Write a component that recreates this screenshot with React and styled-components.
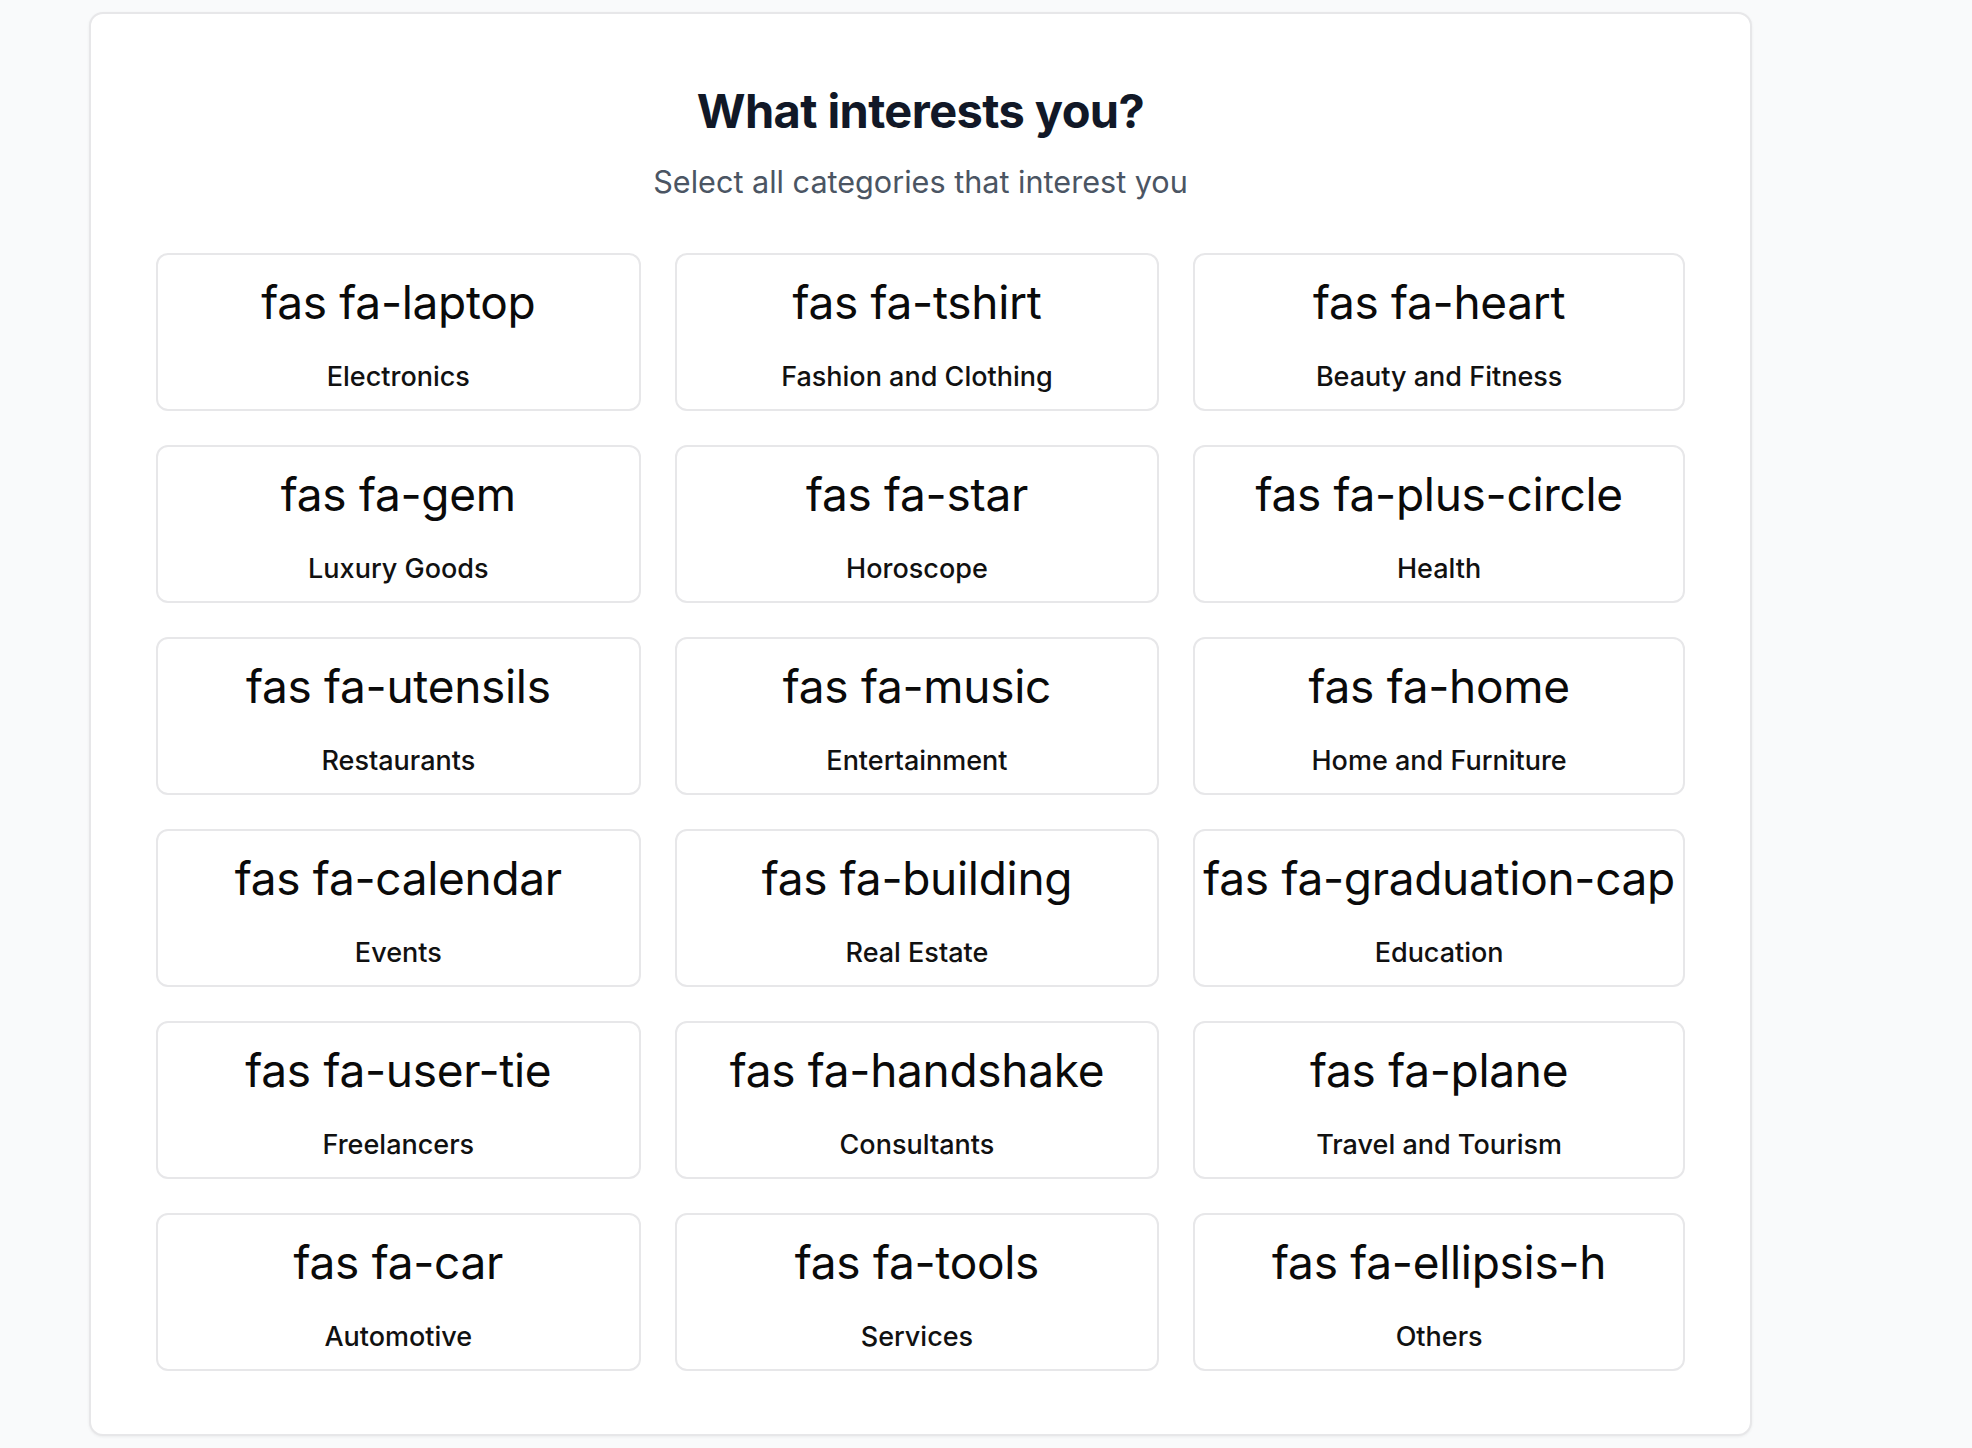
import React from "react";
import styled, { createGlobalStyle } from "styled-components";

const categories = [
  { icon: "fas fa-laptop", name: "Electronics" },
  { icon: "fas fa-tshirt", name: "Fashion and Clothing" },
  { icon: "fas fa-heart", name: "Beauty and Fitness" },
  { icon: "fas fa-gem", name: "Luxury Goods" },
  { icon: "fas fa-star", name: "Horoscope" },
  { icon: "fas fa-plus-circle", name: "Health" },
  { icon: "fas fa-utensils", name: "Restaurants" },
  { icon: "fas fa-music", name: "Entertainment" },
  { icon: "fas fa-home", name: "Home and Furniture" },
  { icon: "fas fa-calendar", name: "Events" },
  { icon: "fas fa-building", name: "Real Estate" },
  { icon: "fas fa-graduation-cap", name: "Education" },
  { icon: "fas fa-user-tie", name: "Freelancers" },
  { icon: "fas fa-handshake", name: "Consultants" },
  { icon: "fas fa-plane", name: "Travel and Tourism" },
  { icon: "fas fa-car", name: "Automotive" },
  { icon: "fas fa-tools", name: "Services" },
  { icon: "fas fa-ellipsis-h", name: "Others" },
];

const GlobalStyle = createGlobalStyle`
  body {
    margin: 0;
    background: #f9fafb;
    font-family: Inter, "Noto Sans", sans-serif;
  }
`;

const Page = styled.div`
  padding: 12px 0 10px 89px;
`;

const Card = styled.div`
  width: 1663px;
  box-sizing: border-box;
  background: #ffffff;
  border: 2px solid #e7e7e9;
  border-radius: 14px;
  box-shadow: 0 1px 3px rgba(0, 0, 0, 0.06);
  padding: 68px 65px 63px;
`;

const Header = styled.div`
  text-align: center;
`;

const Title = styled.h1`
  margin: 0;
  font-size: 47px;
  line-height: 58px;
  font-weight: 700;
  letter-spacing: -0.6px;
  color: #111827;
`;

const Subtitle = styled.p`
  margin: 22px 0 0;
  font-size: 30.6px;
  line-height: 40px;
  font-weight: 400;
  color: #4b5563;
`;

const Grid = styled.div`
  margin-top: 51px;
  display: grid;
  grid-template-columns: repeat(3, 1fr);
  gap: 34px;
`;

const Tile = styled.div`
  box-sizing: border-box;
  height: 158px;
  border: 2px solid #e7e7e9;
  border-radius: 12px;
  padding: 19px 8px 0;
  display: flex;
  flex-direction: column;
  align-items: center;
  gap: 31px;
  text-align: center;
  cursor: pointer;
`;

const IconName = styled.i`
  font-style: normal;
  font-size: 46px;
  line-height: 56px;
  font-weight: 400;
  letter-spacing: -0.3px;
  color: #0a0a0a;
  white-space: nowrap;
`;

const Label = styled.span`
  font-size: 27px;
  line-height: 32px;
  font-weight: 500;
  color: #111111;
`;

export default function App() {
  return (
    <Page>
      <GlobalStyle />
      <Card>
        <Header>
          <Title>What interests you?</Title>
          <Subtitle>Select all categories that interest you</Subtitle>
        </Header>
        <Grid>
          {categories.map((c) => (
            <Tile key={c.name}>
              <IconName className={c.icon}>{c.icon}</IconName>
              <Label>{c.name}</Label>
            </Tile>
          ))}
        </Grid>
      </Card>
    </Page>
  );
}
